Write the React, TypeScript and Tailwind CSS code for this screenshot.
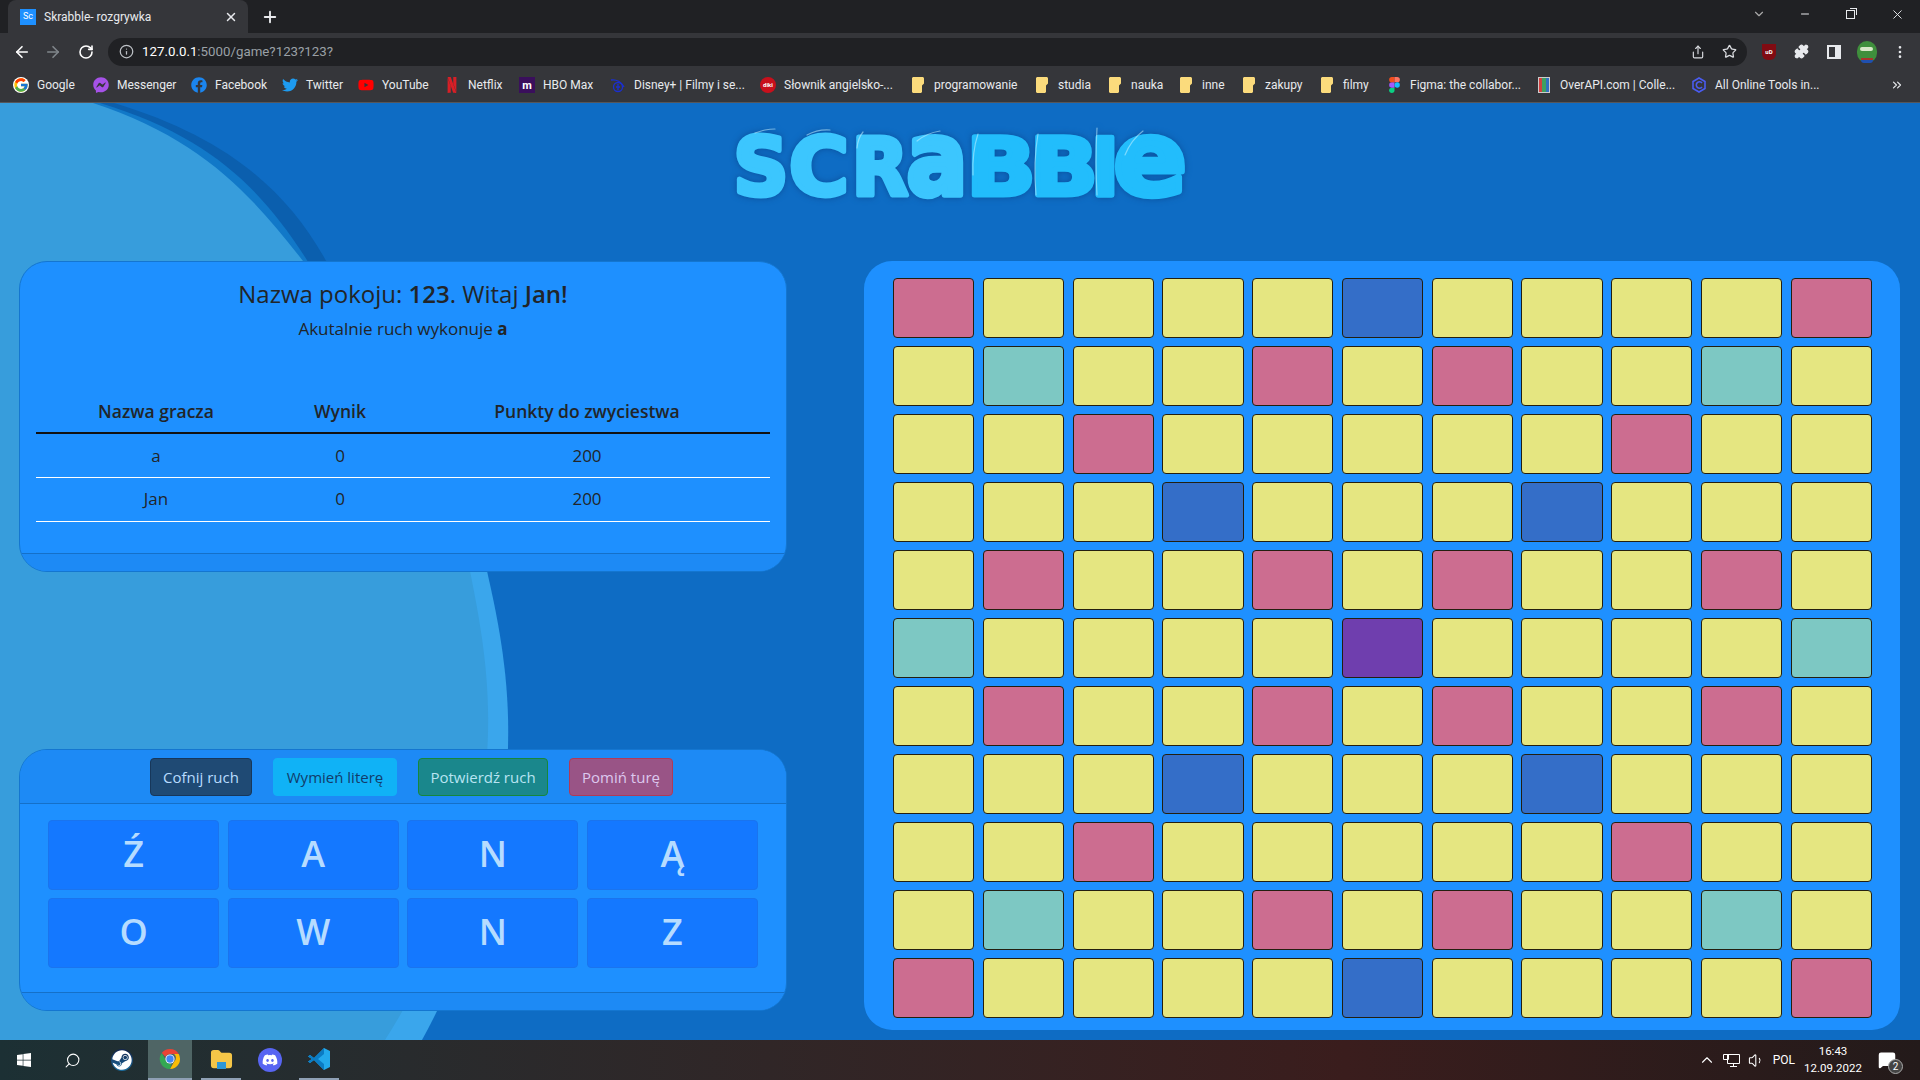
import { ArrowLeft, ArrowRight, RotateCw, Info, Star, Puzzle, MoreVertical, Plus, X, Minus, ChevronDown, ChevronUp, Search, Share, Folder, ChevronsRight, Volume1, MessageSquare } from "lucide-react";
import { FcGoogle } from "react-icons/fc";
import { FaFacebook, FaTwitter, FaYoutube, FaFacebookMessenger, FaSteam, FaDiscord, FaWindows, FaFolder } from "react-icons/fa";
import { SiNetflix } from "react-icons/si";

const uiFont = "font-['Open_Sans','Noto_Sans',sans-serif]";

function ChromeLogo({ size = 22 }: { size?: number }) {
  return (
    <svg width={size} height={size} viewBox="0 0 48 48">
      <path d="M24 2a22 22 0 0 1 19 11H24a11 11 0 0 0-10 6L6 11A22 22 0 0 1 24 2z" fill="#ea4335" />
      <path d="M43 13a22 22 0 0 1-19 33l9-16a11 11 0 0 0 0-17z" fill="#fbbc05" />
      <path d="M24 46A22 22 0 0 1 6 11l9 16a11 11 0 0 0 12 7z" fill="#34a853" />
      <circle cx="24" cy="24" r="10" fill="#fff" />
      <circle cx="24" cy="24" r="8" fill="#4285f4" />
    </svg>
  );
}

function FigmaLogo() {
  return (
    <svg width="11" height="16" viewBox="0 0 12 18">
      <path d="M3 18a3 3 0 0 0 3-3v-3H3a3 3 0 0 0 0 6z" fill="#0acf83" />
      <path d="M0 9a3 3 0 0 1 3-3h3v6H3a3 3 0 0 1-3-3z" fill="#a259ff" />
      <path d="M0 3a3 3 0 0 1 3-3h3v6H3a3 3 0 0 1-3-3z" fill="#f24e1e" />
      <path d="M6 0h3a3 3 0 0 1 0 6H6z" fill="#ff7262" />
      <circle cx="9" cy="9" r="3" fill="#1abcfe" />
    </svg>
  );
}

function BookmarkIcon({ kind }: { kind: string }) {
  if (kind === "google") return <FcGoogle size={16} className="rounded-full bg-white" />;
  if (kind === "messenger") return <FaFacebookMessenger size={16} className="text-[#a652e8]" />;
  if (kind === "facebook") return <FaFacebook size={16} className="text-[#1b85ee]" />;
  if (kind === "twitter") return <FaTwitter size={16} className="text-[#1d9bf0]" />;
  if (kind === "youtube") return <FaYoutube size={16} className="text-[#f00]" />;
  if (kind === "netflix") return <SiNetflix size={16} className="text-[#d81f26]" />;
  if (kind === "hbo")
    return <span className="flex h-4 w-4 items-center justify-center bg-[#3a0f5c] text-[11px] font-bold leading-none text-white">m</span>;
  if (kind === "disney")
    return (
      <svg width="16" height="16" viewBox="0 0 16 16" fill="none" stroke="#1a2fd0" strokeWidth="1.3">
        <path d="M1 3c5-1 11 2 13 7" />
        <circle cx="8" cy="10" r="4.5" />
        <path d="M8 7v6M6 10h4" />
      </svg>
    );
  if (kind === "diki")
    return <span className="flex h-4 w-4 items-center justify-center rounded-full bg-[#c8101c] text-[6px] font-bold leading-none text-white">diki</span>;
  if (kind === "folder") return <FaFolder size={16} className="rotate-90 text-[#fbdb7c]" />;
  if (kind === "figma") return <FigmaLogo />;
  if (kind === "overapi")
    return (
      <span className="flex h-4 w-3 border border-[#ccc]">
        <span className="w-1/3 bg-[#d04040]" />
        <span className="w-1/3 bg-[#40a060]" />
        <span className="w-1/3 bg-[#3070c0]" />
      </span>
    );
  return (
    <svg width="16" height="16" viewBox="0 0 16 16" fill="none" stroke="#4a5cf0" strokeWidth="1.6">
      <path d="M8 1l6 3.5v7L8 15l-6-3.5v-7z" />
      <path d="M11 6a3.2 3.2 0 1 0 0 4" />
    </svg>
  );
}

const bookmarks = [
  { kind: "google", label: "Google", w: "w-[80px]" },
  { kind: "messenger", label: "Messenger", w: "w-[98px]" },
  { kind: "facebook", label: "Facebook", w: "w-[91px]" },
  { kind: "twitter", label: "Twitter", w: "w-[76px]" },
  { kind: "youtube", label: "YouTube", w: "w-[86px]" },
  { kind: "netflix", label: "Netflix", w: "w-[75px]" },
  { kind: "hbo", label: "HBO Max", w: "w-[91px]" },
  { kind: "disney", label: "Disney+ | Filmy i se...", w: "w-[150px]" },
  { kind: "diki", label: "Słownik angielsko-...", w: "w-[150px]" },
  { kind: "folder", label: "programowanie", w: "w-[124px]" },
  { kind: "folder", label: "studia", w: "w-[73px]" },
  { kind: "folder", label: "nauka", w: "w-[71px]" },
  { kind: "folder", label: "inne", w: "w-[63px]" },
  { kind: "folder", label: "zakupy", w: "w-[78px]" },
  { kind: "folder", label: "filmy", w: "w-[67px]" },
  { kind: "figma", label: "Figma: the collabor...", w: "w-[150px]" },
  { kind: "overapi", label: "OverAPI.com | Colle...", w: "w-[155px]" },
  { kind: "online", label: "All Online Tools in...", w: "w-[190px]" },
];

function BrowserChrome() {
  return (
    <div className="shrink-0 font-['Roboto','Liberation_Sans',sans-serif] text-[#e8eaed]">
      {/* pasek kart */}
      <div className="flex h-[33px] items-end bg-[#202124] pl-2">
        <div className="flex h-[33px] w-[240px] items-center rounded-t-lg bg-[#35363a] pl-[12px] pr-[10px]">
          <span className="flex h-4 w-4 items-center justify-center bg-[#1e90ff] text-[9px] leading-none text-white">Sc</span>
          <span className="ml-2 flex-1 text-xs">Skrabble- rozgrywka</span>
          <X size={14} strokeWidth={2.5} />
        </div>
        <div className="ml-[13px] flex h-[33px] items-center">
          <Plus size={18} strokeWidth={2.5} />
        </div>
        <div className="ml-auto flex h-[28px] items-center self-start">
          <div className="flex w-[47px] justify-center"><ChevronDown size={14} className="text-[#aaa]" /></div>
          <div className="flex w-[46px] justify-center"><Minus size={12} /></div>
          <div className="flex w-[46px] justify-center pr-[2px]">
            <span className="relative h-[9px] w-[9px] border border-[#e8eaed] bg-[#202124] after:absolute after:-right-[3px] after:-top-[3px] after:h-[7px] after:w-[7px] after:border-r after:border-t after:border-[#e8eaed]" />
          </div>
          <div className="flex w-[46px] justify-center"><X size={15} strokeWidth={1.5} /></div>
        </div>
      </div>

      {/* pasek adresu */}
      <div className="flex h-[37px] items-center bg-[#35363a] pl-[13px] text-[#dadce0]">
        <ArrowLeft size={18} strokeWidth={2.2} className="text-white" />
        <ArrowRight size={18} strokeWidth={2.2} className="ml-[13px] text-[#80868b]" />
        <RotateCw size={16} strokeWidth={2.4} className="ml-[16px] text-white" />
        <div className="ml-[14px] flex h-[28px] w-[1639px] items-center rounded-full bg-[#202124] pl-[11px] pr-[10px]">
          <Info size={15} className="text-[#bdc1c6]" />
          <span className="ml-[8px] text-[13.3px]">
            <span className="text-white">127.0.0.1</span>
            <span className="text-[#9aa0a6]">:5000/game?123?123?</span>
          </span>
          <Share size={14} className="ml-auto text-[#dadce0]" />
          <Star size={15} className="ml-[17px] text-[#dadce0]" />
        </div>
        <span className="ml-[15px] flex h-4 w-[14px] items-center justify-center rounded-b-md bg-[#800b12] text-[6px] font-bold leading-none text-white">uD</span>
        <Puzzle size={15} fill="#e8eaed" className="ml-[18px] text-[#e8eaed]" />
        <span className="ml-[18px] h-[14px] w-[14px] border-2 border-r-[6px] border-[#e8eaed]" />
        <span className="relative ml-[16px] h-[22px] w-[20px] rounded-full bg-[#3f8f3c]">
          <span className="absolute left-[3px] top-[6px] h-[4px] w-[13px] rounded-full bg-[#d8e8c8]" />
          <span className="absolute bottom-[3px] left-[4px] h-[2px] w-[12px] bg-[#a8342c]" />
          <span className="absolute bottom-0 left-[4px] h-[3px] w-[12px] rounded-b-full bg-[#1f50b0]" />
        </span>
        <MoreVertical size={16} className="ml-[15px] text-[#e8eaed]" />
      </div>

      {/* zakładki */}
      <div className="flex h-[32px] items-center bg-[#35363a] pb-[2px] pl-[13px] text-[12px]">
        {bookmarks.map((b) => (
          <div key={b.label} className={`flex shrink-0 items-center gap-[8px] ${b.w}`}>
            <span className="flex w-4 justify-center"><BookmarkIcon kind={b.kind} /></span>
            <span className="whitespace-nowrap">{b.label}</span>
          </div>
        ))}
        <ChevronsRight size={14} className="ml-[9px]" />
      </div>
      <div className="h-px bg-[#55565a]" />
    </div>
  );
}

const letters = [
  { c: "S", x: 31, sx: 0.96, sy: 1 },
  { c: "C", x: 89, sx: 1.02, sy: 1 },
  { c: "R", x: 150, sx: 0.92, sy: 1 },
  { c: "a", x: 207, sx: 1.13, sy: 1.28 },
  { c: "B", x: 271, sx: 1.14, sy: 1 },
  { c: "B", x: 334, sx: 1.12, sy: 1 },
  { c: "l", x: 375, sx: 1, sy: 0.95 },
  { c: "e", x: 420, sx: 1.35, sy: 1.3 },
];

const gloss = [
  "M25 11Q35 7 45 7",
  "M77 13Q88 7 100 8",
  "M127 26Q128 16 133 10",
  "M187 19Q197 11 210 9",
  "M243 53Q242 30 248 12",
  "M306 73Q303 40 308 12",
  "M367 73Q365 40 367 6",
  "M395 33Q401 18 413 9",
];

function Logo() {
  return (
    <svg width="460" height="90" viewBox="0 0 460 90" className="drop-shadow-[0_0_3px_#0a4f9a]">
      {letters.map((l, i) => (
        <g key={i} transform={`translate(${l.x} 73) scale(${l.sx} ${l.sy})`}>
          <text
            textAnchor="middle"
            fontFamily="'DejaVu Sans', sans-serif"
            fontWeight="700"
            fontSize="80"
            fill={i < 4 ? "#3cc6fe" : "#22bdfc"}
            stroke={i < 4 ? "#3cc6fe" : "#22bdfc"}
            strokeWidth="5"
            strokeLinejoin="round"
          >
            {l.c}
          </text>
        </g>
      ))}
      <g fill="none" stroke="#c4f0ff" strokeWidth="1.2" strokeLinecap="round" opacity="0.55">
        {gloss.map((d) => (
          <path key={d} d={d} />
        ))}
      </g>
    </svg>
  );
}

function PageBackground() {
  return (
    <svg className="absolute inset-0 h-full w-full" viewBox="0 0 1920 937" preserveAspectRatio="none">
      {/* współrzędne liczone od górnej krawędzi strony (y = 103) */}
      <path d="M114 0C230 35 290 90 330 165L330 300L0 300L0 0Z" fill="#0b5fae" />
      <path d="M100 0C215 35 265 90 312 165L312 300L0 300L0 0Z" fill="#1178c8" />
      <path d="M487 468C510 570 540 720 422 937L300 937L300 468Z" fill="#3aa6ec" />
      <path d="M93 0C200 35 250 90 303 158C380 260 450 370 470 468C490 570 522 720 385 937L0 937L0 0Z" fill="#379ddc" />
    </svg>
  );
}

const C: Record<string, string> = {
  P: "bg-[#cc6d90]",
  Y: "bg-[#e5e681]",
  T: "bg-[#7dc8c3]",
  B: "bg-[#346ec8]",
  V: "bg-[#6f3eae]",
};

const boardRows = [
  "PYYYYBYYYYP",
  "YTYYPYPYYTY",
  "YYPYYYYYPYY",
  "YYYBYYYBYYY",
  "YPYYPYPYYPY",
  "TYYYYVYYYYT",
  "YPYYPYPYYPY",
  "YYYBYYYBYYY",
  "YYPYYYYYPYY",
  "YTYYPYPYYTY",
  "PYYYYBYYYYP",
];

function Board() {
  return (
    <div className="grid h-[769px] w-[1036px] grid-cols-11 grid-rows-11 gap-x-[8.3px] gap-y-[8px] rounded-[28px] bg-[#1e90ff] pb-[12px] pl-[29px] pr-[28px] pt-[17px]">
      {boardRows.flatMap((row, r) =>
        row.split("").map((k, c) => (
          <div key={`${r}-${c}`} className={`rounded-[4px] border border-[#231f10] ${C[k]}`} />
        ))
      )}
    </div>
  );
}

const players = [
  { name: "a", score: 0, left: 200 },
  { name: "Jan", score: 0, left: 200 },
];

function RoomCard() {
  return (
    <div className="flex h-[311px] flex-col overflow-hidden rounded-[28px] border border-[#1476d0] bg-[#1e90ff] text-[#212529]">
      <div className="flex-1 px-4 pt-4">
        <h3 className="text-center text-[24px] font-normal leading-[31px]">
          Nazwa pokoju: <b className="font-semibold">123</b>. Witaj <b className="font-semibold">Jan!</b>
        </h3>
        <p className="mt-[7px] text-center text-[17px] leading-[25px]">
          Akutalnie ruch wykonuje <b>a</b>
        </p>
        <table className="mt-[49px] w-full table-fixed text-center text-[17px]">
          <thead>
            <tr className="h-[43px] border-b-2 border-[#111] text-[17.5px]">
              <th className="w-[240px] font-semibold">Nazwa gracza</th>
              <th className="w-[128px] font-semibold">Wynik</th>
              <th className="font-semibold">Punkty do zwyciestwa</th>
            </tr>
          </thead>
          <tbody>
            {players.map((p) => (
              <tr key={p.name} className="h-[44px] border-b border-white">
                <td>{p.name}</td>
                <td>{p.score}</td>
                <td>{p.left}</td>
              </tr>
            ))}
          </tbody>
        </table>
      </div>
      <div className="h-[18px] border-t border-[#1570c8] bg-[#1d8af5]" />
    </div>
  );
}

const actions = [
  { label: "Cofnij ruch", cls: "w-[102px] border-[#17375a] bg-[#1f4a74] text-[#b8dcff]" },
  { label: "Wymień literę", cls: "w-[124px] border-[#10b2f6] bg-[#10b2f6] text-[#123c6a]" },
  { label: "Potwierdź ruch", cls: "w-[130px] border-[#16873c] bg-[#1a878c] text-[#b8e4f2]" },
  { label: "Pomiń turę", cls: "w-[104px] border-[#b03a58] bg-[#995486] text-[#dcc8ee]" },
];

const rack = ["Ź", "A", "N", "Ą", "O", "W", "N", "Z"];

function RackCard() {
  return (
    <div className="flex h-[262px] flex-col overflow-hidden rounded-[28px] border border-[#1476d0] bg-[#1e90ff]">
      <div className="flex h-[55px] items-start justify-center gap-[21px] border-b border-[#1570c8] bg-[#1d8af5] pl-[17px] pt-[8px]">
        {actions.map((a) => (
          <button key={a.label} className={`h-[38px] rounded-[4px] border text-[15px] ${a.cls}`}>
            {a.label}
          </button>
        ))}
      </div>
      <div className="grid flex-1 grid-cols-4 grid-rows-2 content-start gap-x-[8.5px] gap-y-[8px] px-[28px] pb-[24px] pt-[16px]">
        {rack.map((l, i) => (
          <div key={i} className="flex h-[70px] items-center justify-center rounded-[4px] border border-[#1a74ee] bg-[#1478ff] pb-[3px] text-[36px] font-semibold text-[#b6dcff]">
            {l}
          </div>
        ))}
      </div>
      <div className="h-[18px] border-t border-[#1570c8] bg-[#1d8af5]" />
    </div>
  );
}

function VsCode() {
  return (
    <svg width="24" height="24" viewBox="0 0 24 24">
      <path d="M17 1l6 3v16l-6 3L7 13l-4 3-2-1.5L5 12 1 9.5 3 8l4 3z" fill="#23a9ec" />
      <path d="M17 1L7 11l-4-3-2 1.5L5 12l-4 2.5L3 16l4-3L17 23V17l-6-5 6-5z" fill="#0b7cc4" />
    </svg>
  );
}

function Taskbar() {
  return (
    <div className="flex h-[40px] shrink-0 items-center bg-linear-to-r from-[#1c3034] via-[#3a1d1d] via-70% to-[#231a1a] font-['Roboto','Liberation_Sans',sans-serif] text-white">
      <div className="flex w-[48px] justify-center"><FaWindows size={16} /></div>
      <div className="flex w-[48px] justify-center"><Search size={17} className="-scale-x-100" strokeWidth={1.5} /></div>
      <div className="flex w-[52px] justify-center">
        <span className="flex h-[22px] w-[22px] items-center justify-center rounded-full bg-linear-to-b from-[#12234a] to-[#1a6da0]"><FaSteam size={20} /></span>
      </div>
      <div className="flex h-full w-[44px] items-center justify-center border-b-2 border-[#8fa0b5] bg-[#4f6565]"><ChromeLogo /></div>
      <div className="ml-[9px] flex h-full w-[40px] items-center justify-center border-b-2 border-[#8fa0b5]">
        <span className="relative flex"><Folder size={23} fill="#f5c648" className="text-[#f5c648]" /><span className="absolute bottom-[2px] left-[7px] h-[7px] w-[9px] bg-[#2e97d6]" /></span>
      </div>
      <div className="ml-[9px] flex h-full w-[40px] items-center justify-center">
        <span className="flex h-6 w-6 items-center justify-center rounded-full bg-[#5865f2]"><FaDiscord size={16} /></span>
      </div>
      <div className="ml-[9px] flex h-full w-[40px] items-center justify-center border-b-2 border-[#8fa0b5]"><VsCode /></div>

      <div className="ml-auto flex items-center">
        <ChevronUp size={18} strokeWidth={1.5} />
        <svg width="17" height="15" viewBox="0 0 17 15" fill="none" stroke="#fff" className="ml-[7px]">
          <path d="M4.5 1.5h12v9h-12zM10.5 10.5v3M7 13.5h7M.5 1.5h5v5h-5z" />
        </svg>
        <Volume1 size={17} strokeWidth={1.5} className="ml-[8px]" />
        <span className="ml-[8px] text-xs">POL</span>
        <div className="ml-[8px] flex w-[60px] flex-col items-center text-[11.5px] leading-[17px]">
          <span>16:43</span>
          <span>12.09.2022</span>
        </div>
        <div className="relative ml-[15px] mr-[24px] flex">
          <MessageSquare size={18} fill="#fff" />
          <span className="absolute -bottom-[5px] -right-[7px] flex h-[15px] w-[15px] items-center justify-center rounded-full border border-[#aaa] bg-[#444] text-[10px] leading-none">2</span>
        </div>
      </div>
    </div>
  );
}

export default function App() {
  return (
    <div className="flex h-screen w-full flex-col overflow-hidden">
      <BrowserChrome />
      <main className={`relative min-h-0 flex-1 overflow-hidden bg-[#0e6cc4] ${uiFont}`}>
        <PageBackground />
        <div className="relative flex h-full flex-col">
          <div className="flex h-[158px] items-start justify-center pt-[19px]">
            <Logo />
          </div>
          <div className="flex justify-between pl-[19px] pr-[20px]">
            <div className="flex h-[750px] w-[768px] flex-col justify-between">
              <RoomCard />
              <RackCard />
            </div>
            <Board />
          </div>
        </div>
      </main>
      <Taskbar />
    </div>
  );
}
